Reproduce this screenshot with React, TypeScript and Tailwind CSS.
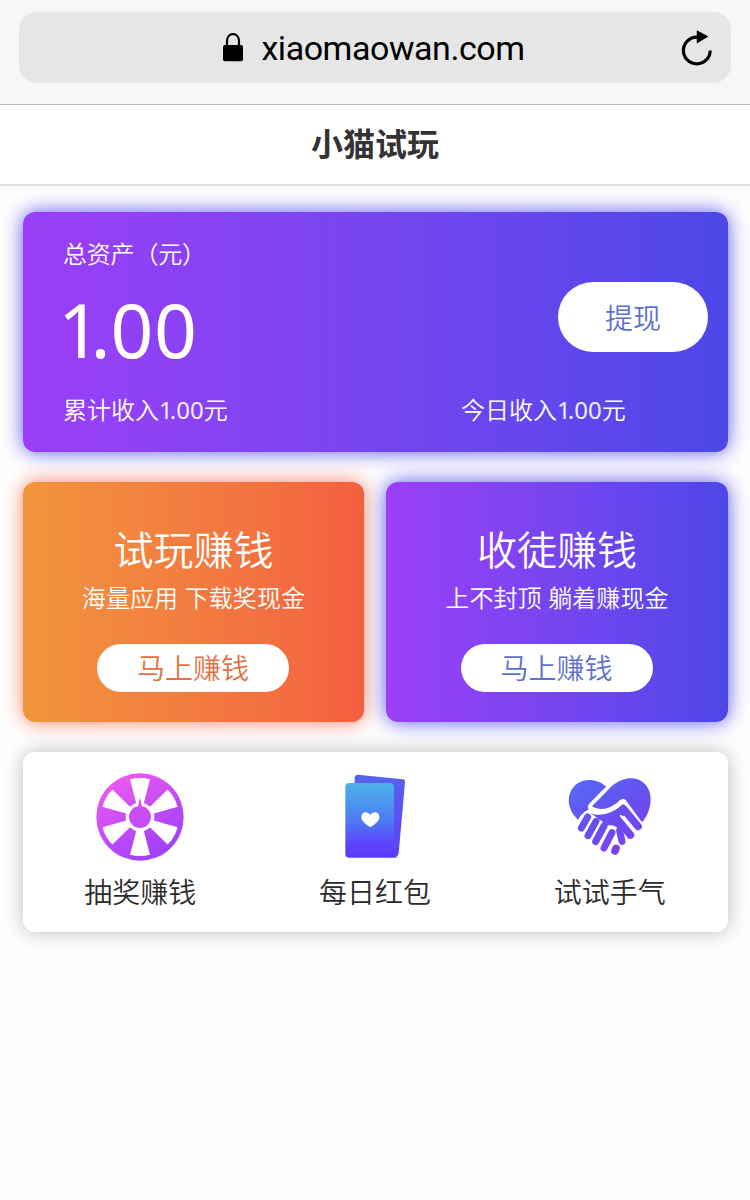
import React from "react";

const cjk = "font-['Noto_Sans_CJK_SC',sans-serif]";

function LockIcon() {
  return (
    <svg width="22" height="30" viewBox="0 0 22 30" className="shrink-0">
      <path d="M5 13V8.2C5 4 7.4 1.2 11 1.2S17 4 17 8.2V13" fill="none" stroke="#000" strokeWidth="2.2" />
      <rect x="1" y="12" width="20" height="16.2" rx="2" fill="#000" />
    </svg>
  );
}

function ReloadIcon() {
  return (
    <svg width="32" height="38" viewBox="0 0 32 38" className="shrink-0">
      <path d="M29.2 21.5A13.4 13.4 0 1 1 15.8 8.1H18" fill="none" stroke="#000" strokeWidth="3.2" />
      <path d="M15.8 1.2L27.4 7.6L15.8 14.6Z" fill="#000" />
    </svg>
  );
}

function WheelIcon() {
  return (
    <svg width="88" height="88" viewBox="48 39 264 264">
      <defs>
        <linearGradient id="wheel" x1="0.15" y1="0" x2="0.75" y2="1">
          <stop offset="0" stopColor="#f35bf0" />
          <stop offset="1" stopColor="#983ffb" />
        </linearGradient>
      </defs>
      <circle cx="180" cy="171" r="131" fill="url(#wheel)" />
      {[0, 60, 120, 180, 240, 300].map((a) => (
        <path key={a} d="M150 58Q180 50 210 58L190 135H170Z" fill="#fff" transform={`rotate(${a} 180 171)`} />
      ))}
      <circle cx="180" cy="171" r="43" fill="#fff" />
      <circle cx="180" cy="171" r="33" fill="#c84df6" />
      <path d="M180 112L187 145H173Z" fill="#d850f4" />
    </svg>
  );
}

function PacketIcon() {
  return (
    <svg width="88" height="88" viewBox="33 39 264 264">
      <defs>
        <linearGradient id="packetBack" x1="0" y1="0" x2="0" y2="1">
          <stop offset="0" stopColor="#5663ee" />
          <stop offset="1" stopColor="#6040fa" />
        </linearGradient>
        <linearGradient id="packetFront" x1="0" y1="0" x2="0" y2="1">
          <stop offset="0" stopColor="#4bb3ea" />
          <stop offset="0.5" stopColor="#4d7cf3" />
          <stop offset="0.8" stopColor="#5b45fb" />
          <stop offset="1" stopColor="#5d38fb" />
        </linearGradient>
      </defs>
      <path d="M114 44L249 58Q256 59 255 66L236 280Q234 292 224 291L104 280V52Q106 43 114 44Z" fill="url(#packetBack)" />
      <path d="M88 69H208Q222 69 222 83V278Q222 292 232 293H88Q76 293 76 281V81Q76 69 88 69Z" fill="url(#packetFront)" />
      <path d="M151 202C137 192 124 184 124 171C124 155 143 152 151 165C159 152 178 155 178 171C178 184 165 192 151 202Z" fill="#fff" />
    </svg>
  );
}

function HandshakeIcon() {
  return (
    <svg width="88" height="88" viewBox="48 39 264 264">
      <defs>
        <linearGradient id="hands" gradientUnits="userSpaceOnUse" x1="90" y1="60" x2="220" y2="285">
          <stop offset="0" stopColor="#5668fb" />
          <stop offset="0.5" stopColor="#6650ed" />
          <stop offset="1" stopColor="#7d3ff5" />
        </linearGradient>
      </defs>
      <path d="M84 179C60 157 50 127 60 100C74 56 132 46 169 80C163 84 158 89 154 94L117 132C113 138 112 144 116 149C102 154 91 165 84 179Z" fill="url(#hands)" />
      <path d="M126 139L169 95C186 76 211 55 243 55C279 55 303 84 302 119C301 145 292 168 276 187L229 123C223 115 216 115 207 123C184 144 154 156 126 139Z" fill="url(#hands)" />
      <path d="M121 158C152 174 190 158 219 133L240 160L222 166L214 176L225 205L212 232L200 208L186 196L170 196L150 180Z" fill="url(#hands)" />
      <g fill="none" stroke="#fff" strokeLinecap="round" strokeWidth="7">
        <path d="M125 180L131 170" />
        <path d="M149 194L153 185" />
        <path d="M178 204C186 196 202 203 202 216C202 225 200 232 204 240" />
      </g>
      <g fill="none" stroke="url(#hands)" strokeLinecap="round" strokeWidth="21">
        <path d="M113 171L94 204" />
        <path d="M138 184L114 227" />
        <path d="M162 198L137 245" />
        <path d="M186 218L162 264" />
        <path d="M198 265L195 273" strokeWidth="23" />
        <path d="M220 146L264 199" strokeWidth="23" />
        <path d="M197 170L241 225" strokeWidth="23" />
        <path d="M209 212L216 244" />
      </g>
      <path d="M213 168L250 211" fill="none" stroke="#fff" strokeLinecap="round" strokeWidth="7" />
    </svg>
  );
}

function Amount() {
  return (
    <span className="font-['Noto_Sans',sans-serif] font-normal text-white/90">
      <span className="tracking-[-3px]">1</span>.00
    </span>
  );
}

function PromoCard({ className, title, subtitle, buttonClass }: { className: string; title: string; subtitle: string; buttonClass: string }) {
  return (
    <section className={`flex h-60 flex-col items-center rounded-xl pt-[41px] text-white ${className}`}>
      <h2 className="text-[40px] leading-[50px] font-[350]">{title}</h2>
      <p className="text-2xl leading-[47px] font-[350] tracking-[0.1px] [word-spacing:1px] whitespace-nowrap">{subtitle}</p>
      <button className={`mt-6 mr-px h-12 w-48 rounded-full bg-white pb-[2px] text-[28px] leading-[46px] font-[350] ${buttonClass}`}>马上赚钱</button>
    </section>
  );
}

function Shortcut({ icon, label }: { icon: React.ReactNode; label: string }) {
  return (
    <div className="flex flex-col items-center">
      {icon}
      <span className="mt-[9px] text-[28px] leading-[42px] font-[350] text-[#2b2b2b]">{label}</span>
    </div>
  );
}

export default function App() {
  return (
    <div className={`min-h-[1200px] w-[750px] bg-[#fefefe] ${cjk}`}>
      <header className="h-[105px] border-b border-[#b5b5b5] bg-[#f7f7f7] pt-3 pr-[19px] pl-[19px]">
        <div className="grid h-[71px] grid-cols-[1fr_auto_1fr] items-center rounded-[18px] bg-[#e6e6e7]">
          <span />
          <div className="flex items-center gap-[17px] pr-[3px]">
            <LockIcon />
            <span className="pt-px font-['Roboto',sans-serif] text-[34px] leading-[48px] tracking-[-0.45px] text-black">xiaomaowan.com</span>
          </div>
          <div className="flex justify-end pr-[18px]">
            <ReloadIcon />
          </div>
        </div>
      </header>
      <h1 className="h-[81px] border-b-2 border-[#dedede] bg-white text-center text-[32px] leading-[74px] font-bold text-[#333]">小猫试玩</h1>
      <main className="flex flex-col gap-[30px] pt-[26px] pr-[22px] pl-[23px]">
        <section className="flex h-60 flex-col rounded-xl bg-linear-to-r from-[#9b3ef8] to-[#4c47e8] px-10 pt-[23px] text-white shadow-[0_0_20px_#5b55f0]">
          <p className="text-2xl leading-9 font-[350] tracking-[-0.2px]">总资产（元）</p>
          <div className="-mr-5 flex h-[120px] items-center justify-between">
            <strong className="-mt-1 -ml-[5px] font-['Noto_Sans',sans-serif] text-[75px] leading-[120px] font-normal">
              <span className="tracking-[-10.5px]">1</span>.<span className="tracking-[0.5px]">00</span>
            </strong>
            <button className="-mt-7 h-[70px] w-[150px] rounded-full bg-white pb-px text-[28px] font-[350] text-[#5d70d0]">提现</button>
          </div>
          <div className="grid grid-cols-[398px_1fr] text-2xl leading-9 font-[350]">
            <span>累计收入<Amount />元</span>
            <span>今日收入<Amount />元</span>
          </div>
        </section>
        <div className="grid grid-cols-[341px_342px] justify-between">
          <PromoCard
            className="bg-linear-to-r from-[#f1953c] to-[#f35f41] shadow-[0_0_20px_#fa8068]"
            title="试玩赚钱"
            subtitle="海量应用 下载奖现金"
            buttonClass="text-[#e2713f]"
          />
          <PromoCard
            className="bg-linear-to-r from-[#9b3ef8] to-[#4c47e8] shadow-[0_0_20px_#5b55f0]"
            title="收徒赚钱"
            subtitle="上不封顶 躺着赚现金"
            buttonClass="text-[#5d70d0]"
          />
        </div>
        <nav className="grid h-[180px] grid-cols-3 rounded-xl bg-white pt-[21px] pr-px shadow-[0_0_20px_#bbb]">
          <Shortcut icon={<WheelIcon />} label="抽奖赚钱" />
          <Shortcut icon={<PacketIcon />} label="每日红包" />
          <Shortcut icon={<HandshakeIcon />} label="试试手气" />
        </nav>
      </main>
    </div>
  );
}
